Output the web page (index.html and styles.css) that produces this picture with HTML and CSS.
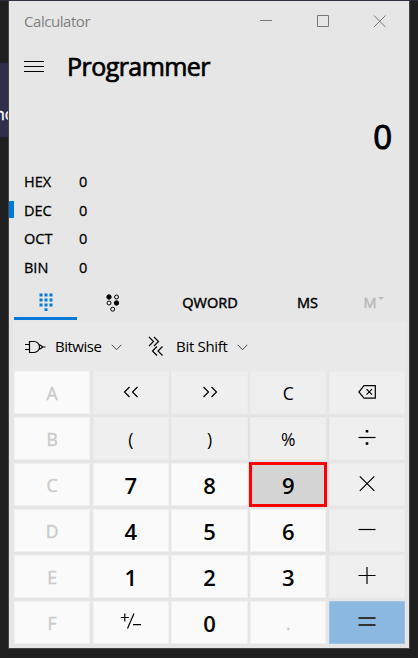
FILE: index.html
```
<!DOCTYPE html>
<html lang="en">
<head>
<meta charset="utf-8">
<title>Calculator</title>
<link rel="stylesheet" href="styles.css">
</head>
<body>
<div class="desktop">
<div class="behind"><span>no</span></div>
<main class="window">
  <header class="titlebar">
    <span class="caption">Calculator</span>
    <svg class="controls" width="128" height="16" viewBox="0 0 128 16"><path d="M1 7.500h12M58.500 2.500h11v11h-11zM115 2.500l11.500 11.500M126.500 2.500l-11.500 11.500"/></svg>
  </header>
  <div class="mode">
    <svg width="20" height="12" viewBox="0 0 20 12"><path d="M0 .5h20M0 5.500h20M0 10.500h20"/></svg>
    <h1>Programmer</h1>
  </div>
  <div class="display">0</div>
  <div class="bases">
    <div class="base"><span>HEX</span><b>0</b></div>
    <div class="base active"><span>DEC</span><b>0</b></div>
    <div class="base"><span>OCT</span><b>0</b></div>
    <div class="base"><span>BIN</span><b>0</b></div>
  </div>
  <nav class="tabs">
    <div class="tab selected"><svg width="14" height="18" viewBox="0 0 14 18"><path d="M.5.500h3v3h-3zM5.500.500h3v3h-3zM10.500.500h3v3h-3zM.5 5.500h3v3h-3zM5.500 5.500h3v3h-3zM10.500 5.500h3v3h-3zM.5 10.500h3v3h-3zM5.500 10.500h3v3h-3zM10.500 10.500h3v3h-3zM5.500 15.200h3v2.800h-3z"/></svg></div>
    <div class="tab bits"><svg width="14" height="18" viewBox="0 0 14 18"><circle cx="3" cy="3" r="2.200" fill="#000"/><circle cx="10.500" cy="3" r="2"/><circle cx="3" cy="9" r="2"/><circle cx="10.500" cy="9" r="2.200" fill="#000"/><circle cx="6.700" cy="15.200" r="2"/></svg></div>
    <div class="tab word">QWORD</div>
    <div class="tab ms">MS</div>
    <div class="tab memory">M<i></i></div>
  </nav>
  <section class="panel">
    <div class="tools">
      <svg class="gate" width="21" height="14" viewBox="0 0 21 14"><path d="M4.500 1.500h4.500a5.500 5.500 0 0 1 0 11h-4.500zM0 4.500h4.500M0 9.500h4.500M14.500 4.800l3.500 2.200-3.500 2.200M18 7h2.500"/></svg>
      <span class="bitwise">Bitwise</span>
      <svg class="chevron" width="11" height="7" viewBox="0 0 11 7"><path d="M.7.8l4.800 4.900L10.300.8"/></svg>
      <svg class="shift" width="16" height="21" viewBox="0 0 16 21"><path d="M1 1l4.500 4.500L1 10M6 1l4.500 4.500L6 10M9 10.500l-4.500 4.500 4.500 4.500M14.500 10.500l-4.500 4.500 4.500 4.500"/></svg>
      <span class="bitshift">Bit Shift</span>
      <svg class="chevron" width="11" height="7" viewBox="0 0 11 7"><path d="M.7.8l4.800 4.900L10.300.8"/></svg>
    </div>
    <div class="keys">
      <button class="key hex">A</button>
      <button class="key op"><svg width="16" height="12" viewBox="0 0 16 12"><path d="M6.500 1L1.500 6l5 5M14.500 1l-5 5 5 5"/></svg></button>
      <button class="key op"><svg width="16" height="12" viewBox="0 0 16 12"><path d="M1.500 1l5 5-5 5M9.500 1l5 5-5 5"/></svg></button>
      <button class="key op">C</button>
      <button class="key op"><svg width="18" height="14" viewBox="0 0 18 14"><path d="M6 .7h11.300v12.500H6L.9 7zM8.500 4.200l5.500 5.500M14 4.200L8.500 9.700"/></svg></button>

      <button class="key hex">B</button>
      <button class="key op">(</button>
      <button class="key op shade-left">)</button>
      <button class="key op shade-top">%</button>
      <button class="key op shade-right"><svg class="sign" width="18" height="18" viewBox="0 0 18 18"><path d="M.5 9.500h17"/><path class="dot" d="M7.700 2h2.600v2.600H7.700zM7.700 14.200h2.600v2.600H7.700z"/></svg></button>

      <button class="key hex">C</button>
      <button class="key num">7</button>
      <button class="key num shade-left">8</button>
      <button class="key num pressed">9</button>
      <button class="key op shade-right"><svg class="sign" width="18" height="18" viewBox="0 0 18 18"><path d="M1.800 2.300l14.500 14.500M16.300 2.300L1.800 16.800"/></svg></button>

      <button class="key hex">D</button>
      <button class="key num">4</button>
      <button class="key num shade-left">5</button>
      <button class="key num shade-bottom">6</button>
      <button class="key op shade-right"><svg class="sign" width="18" height="18" viewBox="0 0 18 18"><path d="M.5 9.500h17"/></svg></button>

      <button class="key hex">E</button>
      <button class="key num">1</button>
      <button class="key num">2</button>
      <button class="key num">3</button>
      <button class="key op"><svg class="sign" width="18" height="18" viewBox="0 0 18 18"><path d="M.5 9.500h17M9 1v17"/></svg></button>

      <button class="key hex">F</button>
      <button class="key num"><svg class="sign" width="22" height="18" viewBox="0 0 22 18"><path d="M.8 5.500h8M4.800 1.500v8M14 1.500L7.500 16.500M13 12.700h8"/></svg></button>
      <button class="key num">0</button>
      <button class="key hex point">.</button>
      <button class="key equals"><svg class="sign" width="18" height="18" viewBox="0 0 18 18"><path d="M.5 6h17M.5 13h17"/></svg></button>
    </div>
  </section>
</main>
</div>
</body>
</html>
```
FILE: styles.css
```
* { box-sizing: border-box; }
body { margin: 0; background: #1f1f1f; font-family: "Open Sans", "Noto Sans", sans-serif; color: #000; }
svg { display: block; flex: none; fill: none; stroke: #000; }
.desktop { position: relative; width: 418px; height: 658px; padding: 0 8px; border-top: 1px solid #30303e; overflow: hidden; }
.behind { position: absolute; left: 0; top: 62px; width: 9px; height: 74px; background: #302f4b; color: #fff; overflow: hidden; }
.behind span { position: absolute; left: -5px; top: 39px; font-size: 16px; line-height: 24px; -webkit-text-stroke: .3px #fff; }
.window { position: relative; width: 402px; height: 648px; background: #e6e6e6; border: 1px solid #454545; border-top: 0; }
.titlebar { height: 41px; padding: 0 17px 0 15px; display: flex; align-items: center; justify-content: space-between; }
.caption { font-size: 15px; line-height: 20px; letter-spacing: -.45px; color: #808080; margin-top: -1px; }
.controls { stroke: #777; margin: -2px 5px 0 0; }
.mode { height: 50px; padding-left: 15px; display: flex; align-items: center; gap: 23px; }
h1 { margin: -2px 0 0; font-size: 25px; line-height: 32px; font-weight: 400; letter-spacing: -.55px; -webkit-text-stroke: .7px #000; }
.display { height: 75px; padding: 21px 17px 0 0; text-align: right; font-size: 33px; line-height: 48px; font-weight: 400; -webkit-text-stroke: 1px #000; }
.bases { height: 115px; display: grid; grid-template-rows: repeat(4, 1fr); }
.base { position: relative; display: flex; align-items: center; padding-left: 15px; font-size: 14.500px; letter-spacing: 0; -webkit-text-stroke: .3px #000; }
.base span { width: 55px; }
.base b { font-weight: 400; }
.active::before { content: ""; position: absolute; left: 0; top: 5px; width: 5px; height: 17px; background: #0078d7; }
.tabs { height: 40px; padding: 3px 0 0 5px; display: flex; }
.tab { display: flex; align-items: center; justify-content: center; height: 35px; font-size: 14.500px; letter-spacing: 0; -webkit-text-stroke: .45px currentColor; }
.selected { width: 63px; border-bottom: 3px solid #0078d7; }
.selected svg { stroke: none; fill: #0078d7; margin-top: 2px; }
.bits { width: 72px; }
.bits svg { stroke-width: 1; }
.word { width: 122px; }
.ms { width: 73px; }
.memory { width: 59px; color: #b9b9b9; gap: 1px; }
.memory i { border: 3px solid transparent; border-top-color: #b9b9b9; border-bottom: 0; margin-top: -8px; }
.panel { margin: 0 3px 0 4px; background: #e9e9e9; }
.tools { height: 49px; padding-left: 12px; display: flex; align-items: center; font-size: 15px; }
.tools span { margin-top: -1px; }
.tools svg { stroke-width: 1.200; }
.tools .chevron { stroke: #444; stroke-width: 1; margin-top: 2px; }
.tools .bitwise { width: 46px; margin-left: 9px; margin-right: 10px; letter-spacing: -.5px; }
.tools .bitshift { width: 52px; margin-left: 12px; margin-right: 9px; letter-spacing: -.3px; white-space: nowrap; }
.tools .shift { margin-left: 26px; }
.keys { height: 277px; padding: 0 1px 4px; background: #e6e6e6; display: grid; grid-template-columns: repeat(5, 1fr); grid-template-rows: repeat(6, 1fr); gap: 2.600px; }
.key { position: relative; margin: 0; padding: 0; border: 1px solid #f1f1f1; border-radius: 0; background: #fafafa; display: flex; align-items: center; justify-content: center; font: 600 22px/28px "Open Sans", "Noto Sans", sans-serif; color: #000; }
.hex { font-size: 17.500px; font-weight: 400; color: #cacaca; padding-top: 1px; -webkit-text-stroke: .4px #cacaca; }
.op { background: #efefef; border-color: #ececec; font-size: 17.500px; font-weight: 400; }
.key svg { stroke-width: 1.200; margin-top: -1px; }
.key .sign { margin-top: -3px; }
.op .dot { fill: #000; stroke: none; }
.num { padding-top: 1px; }
.pressed { outline: 3px solid #f00; outline-offset: -2px; background: #d4d4d4; border: 0; z-index: 1; }
.equals { background: #8ab8e0; border-color: #9dc3e5; }
.equals .sign { stroke: #333; stroke-width: 2; }
.shade-left { box-shadow: 1px 0 1px #e0e0e0; }
.shade-right { box-shadow: -1px 0 1px #e0e0e0; }
.shade-top, .shade-bottom { box-shadow: 0 0 2px #dadada; }
```
